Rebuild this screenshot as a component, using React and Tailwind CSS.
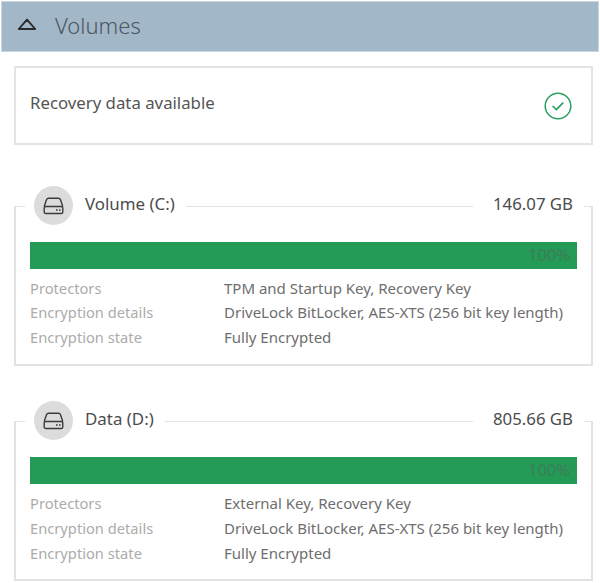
const font = "font-['Noto_Sans','Open_Sans',sans-serif]";

function Drive() {
  return (
    <svg width="21" height="18" viewBox="0 0 21 18" fill="none" stroke="#3a3a3a" strokeWidth="1.4" strokeLinejoin="round">
      <path d="M1.2 9.5 L3.6 2.6 Q4 1.2 5.6 1.2 H15.4 Q17 1.2 17.4 2.6 L19.8 9.5" />
      <rect x="1.2" y="9.5" width="18.6" height="7" rx="1.6" />
      <path d="M13 13h1.6M16 13h1.6" strokeWidth="1.6" />
    </svg>
  );
}

function Row({ label, value, tall }) {
  return (
    <div className={(tall ? "h-[25px]" : "h-[24.5px]") + " flex items-center leading-none"}>
      <div className="w-[194px] shrink-0 text-[14.7px] text-[#ababab]">{label}</div>
      <div className="whitespace-nowrap text-[15px] text-[#6e6e6e]">{value}</div>
    </div>
  );
}

function Volume({ name, size, protectors, tall }) {
  return (
    <div className="mx-[14px] h-[160px] w-[579px] border-2 border-t-[1.5px] border-[#e2e2e2]">
      <div className="mt-[-21px] ml-[9px] mr-[7px] flex h-[39px] items-center justify-between">
        <div className="flex h-[39px] items-center bg-white pl-[9px] pr-[11px]">
          <div className="flex h-[39px] w-[39px] items-center justify-center rounded-full bg-[#dcdcdc]">
            <Drive />
          </div>
          <div className="mt-[-3px] ml-[12px] text-[16.9px] leading-none text-[#4c4c4c]">{name}</div>
        </div>
        <div className="mt-[-3px] bg-white pl-[20px] pr-[11px] text-[16.8px] leading-none text-[#4c4c4c]">{size}</div>
      </div>
      <div className="mx-[14px] mt-[17px] flex h-[27px] items-center justify-end bg-[#239b56] pr-[7px] text-[16.5px] leading-none text-[#3d7d58]">
        100%
      </div>
      <div className="mx-[14px] mt-[7px]">
        <Row tall={tall} label="Protectors" value={protectors} />
        <Row tall={tall} label="Encryption details" value="DriveLock BitLocker, AES-XTS (256 bit key length)" />
        <Row tall={tall} label="Encryption state" value="Fully Encrypted" />
      </div>
    </div>
  );
}

export default function App() {
  return (
    <div className={"h-[583px] w-[600px] overflow-hidden bg-white pt-px " + font}>
      <div className="ml-px flex h-[51px] w-[598px] items-center border border-[#c9d5df] bg-[#a2b7c8]">
        <svg className="ml-[15px] mt-[-4px]" width="20" height="13" viewBox="0 0 20 13" fill="none" stroke="#2b2b2b" strokeWidth="1.9" strokeLinejoin="round">
          <path d="M10 1.6 L18.2 11 H1.8 Z" />
        </svg>
        <div className="mt-[-4px] ml-[18px] text-[22px] font-light leading-none text-[#4a5661]">Volumes</div>
      </div>
      <div className="mx-[14px] mt-[14px] flex h-[79px] w-[579px] items-center justify-between border-2 border-[#e4e4e4] pl-[14px] pr-[19px]">
        <div className="mt-[-5px] text-[16.8px] leading-none text-[#555555]">Recovery data available</div>
        <svg width="28" height="28" viewBox="0 0 28 28" fill="none" stroke="#27a060">
          <circle cx="14" cy="14" r="12.8" strokeWidth="1.5" />
          <path d="M8.6 14 L12.4 17.6 L19.2 10.6" strokeWidth="1.7" />
        </svg>
      </div>
      <div className="mt-[61px]">
        <Volume name="Volume (C:)" size="146.07 GB" protectors="TPM and Startup Key, Recovery Key" />
      </div>
      <div className="mt-[55px]">
        <Volume tall name="Data (D:)" size="805.66 GB" protectors="External Key, Recovery Key" />
      </div>
    </div>
  );
}
